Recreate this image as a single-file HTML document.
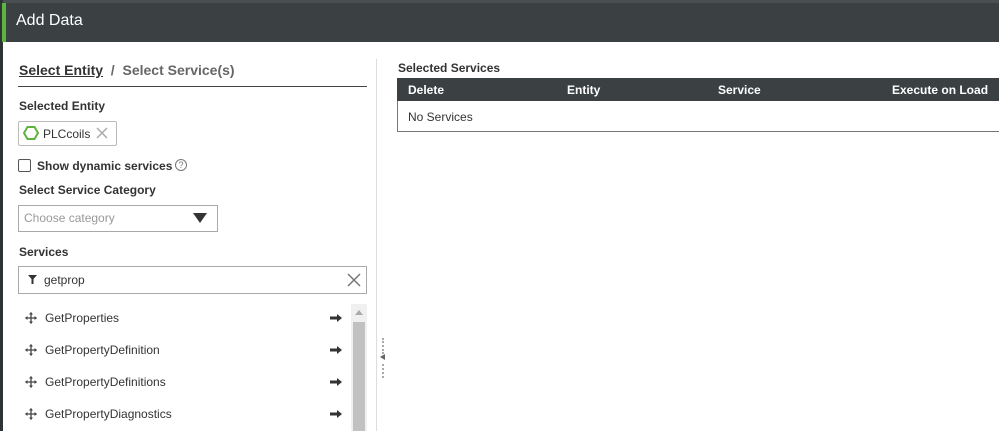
<!DOCTYPE html>
<html><head><style>
body{margin:0;width:999px;height:431px;overflow:hidden;background:#fff;font-family:"Liberation Sans",Arial,sans-serif;position:relative}
.a{position:absolute}
.lbl{font-size:12px;font-weight:bold;color:#333}
.row{position:absolute;left:45px;font-size:12px;color:#333}
</style></head><body>
<div class="a" style="left:0;top:0;width:999px;height:3px;background:#4a4f52"></div>
<div class="a" style="left:0;top:0;width:3px;height:431px;background:#2e3335"></div>
<div class="a" style="left:2px;top:3px;width:997px;height:39px;background:#3b4143"></div>
<div class="a" style="left:2px;top:3px;width:4px;height:39px;background:#5db33d"></div>
<div class="a" style="left:16px;top:12px;color:#fff;font-size:16px">Add Data</div>

<div class="a" style="left:19px;top:62px;font-size:14px;font-weight:bold;color:#333"><span style="text-decoration:underline">Select Entity</span> <span style="color:#666">&nbsp;/&nbsp; Select Service(s)</span></div>
<div class="a" style="left:18px;top:86px;width:349px;height:1px;background:#444"></div>
<div class="a lbl" style="left:19px;top:99px">Selected Entity</div>
<div class="a" style="left:18px;top:121px;width:99px;height:25px;border:1px solid #bbb;border-radius:2px;box-sizing:border-box"></div>
<svg class="a" style="left:23px;top:125px" width="16" height="16" viewBox="0 0 16 16"><polygon points="4.5,2 11.5,2 15,8 11.5,14 4.5,14 1,8" fill="none" stroke="#5db33d" stroke-width="2"/></svg>
<div class="a" style="left:43px;top:127px;font-size:12px;color:#333">PLCcoils</div>
<svg class="a" style="left:95px;top:126px" width="14" height="14"><path d="M2 2L12 12M12 2L2 12" stroke="#aaa" stroke-width="1.5"/></svg>
<div class="a" style="left:18px;top:159px;width:13px;height:13px;border:1px solid #555;border-radius:2px;box-sizing:border-box"></div>
<div class="a lbl" style="left:37px;top:159px">Show dynamic services</div>
<div class="a" style="left:175px;top:159px;width:12px;height:12px;border:1px solid #777;border-radius:50%;box-sizing:border-box;font-size:9px;text-align:center;line-height:11px;color:#777">?</div>
<div class="a lbl" style="left:19px;top:183px">Select Service Category</div>
<div class="a" style="left:18px;top:205px;width:200px;height:27px;border:1px solid #aaa;box-sizing:border-box"></div>
<div class="a" style="left:24px;top:211px;font-size:12px;color:#999">Choose category</div>
<svg class="a" style="left:193px;top:213px" width="14" height="10"><polygon points="0,0 14,0 7,10" fill="#333"/></svg>
<div class="a lbl" style="left:19px;top:245px">Services</div>
<div class="a" style="left:18px;top:266px;width:349px;height:28px;border:1px solid #aaa;box-sizing:border-box"></div>
<svg class="a" style="left:28px;top:275px" width="9" height="9"><polygon points="0,0 9,0 5.5,4 5.5,9 3.5,9 3.5,4" fill="#333"/></svg>
<div class="a" style="left:44px;top:273px;font-size:12px;color:#333">getprop</div>
<svg class="a" style="left:347px;top:273px" width="14" height="14"><path d="M1 1L13 13M13 1L1 13" stroke="#777" stroke-width="1.5"/></svg>
<div class="a" style="left:351px;top:304px;width:16px;height:127px;background:#f0f0f0"></div>
<div class="a" style="left:353px;top:322px;width:12px;height:109px;background:#c1c1c1"></div>
<svg class="a" style="left:355px;top:310px" width="8" height="5"><polygon points="0,5 8,5 4,0" fill="#aaa"/></svg>
<div class="a" style="left:376px;top:59px;width:1px;height:372px;background:#ddd"></div>
<div class="a" style="left:382px;top:338px;width:3px;height:16px;border-left:2px dotted #aaa"></div>
<div class="a" style="left:382px;top:364px;width:3px;height:14px;border-left:2px dotted #aaa"></div>
<svg class="a" style="left:380px;top:354px" width="5" height="6"><polygon points="5,0 5,6 0,3" fill="#666"/></svg>

<div class="a lbl" style="left:398px;top:61px">Selected Services</div>
<div class="a" style="left:397px;top:78px;width:602px;height:54px;border:1px solid #777;box-sizing:border-box;border-right:none"></div>
<div class="a" style="left:397px;top:78px;width:602px;height:23px;background:#3b4143"></div>
<div class="a" style="left:408px;top:83px;color:#fff;font-size:12px;font-weight:bold">Delete</div>
<div class="a" style="left:567px;top:83px;color:#fff;font-size:12px;font-weight:bold">Entity</div>
<div class="a" style="left:718px;top:83px;color:#fff;font-size:12px;font-weight:bold">Service</div>
<div class="a" style="left:892px;top:83px;color:#fff;font-size:12px;font-weight:bold">Execute on Load</div>
<div class="a" style="left:408px;top:110px;font-size:12px;color:#333">No Services</div>

<svg width="0" height="0" style="position:absolute"><defs>
<g id="mv"><path d="M6 0.5V11.5M0.5 6H11.5" stroke="#444" stroke-width="1.3"/><path d="M6 0L4 2.5H8ZM6 12L4 9.5H8ZM0 6L2.5 4V8ZM12 6L9.5 4V8Z" fill="#444"/></g>
<g id="ar"><path d="M0 5H8" stroke="#333" stroke-width="3"/><path d="M7 1L12 5L7 9Z" fill="#333"/></g>
</defs></svg>
<svg class="a" style="left:25px;top:312px" width="12" height="12"><use href="#mv"/></svg>
<svg class="a" style="left:25px;top:344px" width="12" height="12"><use href="#mv"/></svg>
<svg class="a" style="left:25px;top:376px" width="12" height="12"><use href="#mv"/></svg>
<svg class="a" style="left:25px;top:408px" width="12" height="12"><use href="#mv"/></svg>
<svg class="a" style="left:330px;top:313px" width="12" height="10"><use href="#ar"/></svg>
<svg class="a" style="left:330px;top:345px" width="12" height="10"><use href="#ar"/></svg>
<svg class="a" style="left:330px;top:377px" width="12" height="10"><use href="#ar"/></svg>
<svg class="a" style="left:330px;top:409px" width="12" height="10"><use href="#ar"/></svg>
<div class="row" style="top:311px">GetProperties</div>
<div class="row" style="top:343px">GetPropertyDefinition</div>
<div class="row" style="top:375px">GetPropertyDefinitions</div>
<div class="row" style="top:407px">GetPropertyDiagnostics</div>
</body></html>
